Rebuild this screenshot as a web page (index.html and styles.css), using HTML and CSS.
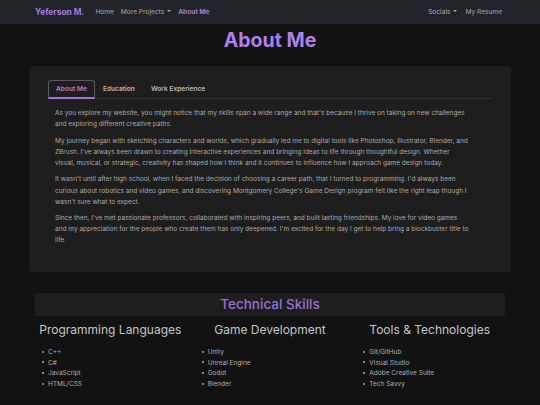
FILE: index.html
```html
<!DOCTYPE html>
<html lang="en">
<head>
<meta charset="utf-8">
<title>About Me</title>
<link rel="stylesheet" href="styles.css">
</head>
<body>
<nav class="navbar">
  <a class="brand" href="#">Yeferson M.</a>
  <ul class="nav-links">
    <li><a href="#">Home</a></li>
    <li><a href="#" class="dropdown">More Projects</a></li>
    <li><a href="#" class="active">About Me</a></li>
  </ul>
  <ul class="nav-links nav-right">
    <li><a href="#" class="dropdown">Socials</a></li>
    <li><a href="#">My Resume</a></li>
  </ul>
</nav>
<main>
  <h1 class="page-title">About Me</h1>
  <section class="card">
    <ul class="tabs">
      <li><a href="#" class="tab active">About Me</a></li>
      <li><a href="#" class="tab">Education</a></li>
      <li><a href="#" class="tab">Work Experience</a></li>
    </ul>
    <div class="tab-content">
      <p>As you explore my website, you might notice that my skills span a wide range and that's because I thrive on taking on new challenges<br>and exploring different creative paths.</p>
      <p>My journey began with sketching characters and worlds, which gradually led me to digital tools like Photoshop, Illustrator, Blender, and<br>ZBrush. I've always been drawn to creating interactive experiences and bringing ideas to life through thoughtful design. Whether<br>visual, musical, or strategic, creativity has shaped how I think and it continues to influence how I approach game design today.</p>
      <p>It wasn't until after high school, when I faced the decision of choosing a career path, that I turned to programming. I'd always been<br>curious about robotics and video games, and discovering Montgomery College's Game Design program felt like the right leap though I<br>wasn't sure what to expect.</p>
      <p>Since then, I've met passionate professors, collaborated with inspiring peers, and built lasting friendships. My love for video games<br>and my appreciation for the people who create them has only deepened. I'm excited for the day I get to help bring a blockbuster title to<br>life.</p>
    </div>
  </section>
  <section class="skills">
    <h2 class="skills-title">Technical Skills</h2>
    <div class="skills-grid">
      <div class="skill-col col-1">
        <h3>Programming Languages</h3>
        <ul>
          <li>C++</li>
          <li>C#</li>
          <li>JavaScript</li>
          <li>HTML/CSS</li>
        </ul>
      </div>
      <div class="skill-col col-2">
        <h3>Game Development</h3>
        <ul>
          <li>Unity</li>
          <li>Unreal Engine</li>
          <li>Godot</li>
          <li>Blender</li>
        </ul>
      </div>
      <div class="skill-col col-3">
        <h3>Tools &amp; Technologies</h3>
        <ul>
          <li>Git/GitHub</li>
          <li>Visual Studio</li>
          <li>Adobe Creative Suite</li>
          <li>Tech Savvy</li>
        </ul>
      </div>
    </div>
  </section>
</main>
</body>
</html>
```
FILE: styles.css
```css
* { box-sizing: border-box; }
html, body {
  margin: 0;
  padding: 0;
  background: #121212;
  font-family: Inter, "Noto Sans", sans-serif;
  color: #b4b4b4;
}
a { text-decoration: none; color: inherit; }
ul { list-style: none; margin: 0; padding: 0; }

.navbar {
  height: 24px;
  background: #212428;
  display: flex;
  align-items: center;
  padding: 0 38px 0 35px;
}
.brand {
  color: #a47be2;
  font-weight: 700;
  font-size: 8.4px;
  margin-right: 11px;
}
.nav-links {
  display: flex;
  gap: 7px;
  font-size: 6.6px;
  color: #a9a9ab;
}
.nav-links .active { color: #a47be2; font-weight: 700; }
.nav-right { margin-left: auto; gap: 8px; }
.dropdown::after {
  content: "";
  display: inline-block;
  margin-left: 3px;
  vertical-align: 2px;
  border-top: 2.2px solid #a9a9ab;
  border-left: 2.2px solid transparent;
  border-right: 2.2px solid transparent;
}

.page-title {
  margin: 4px 0 14px;
  text-align: center;
  font-size: 19.5px;
  line-height: 24px;
  font-weight: 700;
  color: #ad80ee;
}

.card {
  margin: 0 29px;
  background: #1e1e1e;
  border-radius: 4px;
  padding: 14px 19px 20px;
}
.tabs {
  display: flex;
  border-bottom: 1px solid #333336;
  font-size: 6.6px;
  font-weight: 600;
  color: #b8b8b8;
}
.tab {
  display: block;
  height: 19px;
  line-height: 17px;
  padding: 0 7px;
  border: 1px solid transparent;
  margin-bottom: -1px;
}
.tab.active {
  color: #a47be2;
  border-color: #5a5a5e;
  border-bottom: 2px solid #9d73dc;
  border-radius: 3px 3px 0 0;
}
.tab-content {
  padding: 9px 3px 0 7px;
  font-size: 6.5px;
  line-height: 11.1px;
  color: #ababab;
}
.tab-content p { margin: 0 0 5.5px; }

.skills { margin: 21px 35px 0; }
.skills-title {
  margin: 0;
  background: #1e1e1e;
  text-align: center;
  font-size: 13.5px;
  line-height: 23px;
  font-weight: 500;
  color: #9b6fd6;
}
.skills-grid {
  display: grid;
  grid-template-columns: repeat(3, 1fr);
}
.skill-col h3 {
  margin: 6px 0 9px;
  text-align: center;
  font-size: 12px;
  line-height: 16px;
  font-weight: 400;
  color: #c4c4c4;
}
.col-1 h3 { padding-right: 6px; }
.col-3 h3 { padding-left: 6px; }
.skill-col ul {
  font-size: 6.5px;
  line-height: 10.7px;
  color: #b0b0b0;
}
.skill-col li::before {
  content: "";
  display: inline-block;
  width: 2px;
  height: 2px;
  border-radius: 50%;
  background: #b0b0b0;
  margin-right: 4px;
  vertical-align: 1.5px;
}
.col-1 ul { padding-left: 7px; }
.col-2 ul { padding-left: 10px; }
.col-3 ul { padding-left: 15px; }
```
